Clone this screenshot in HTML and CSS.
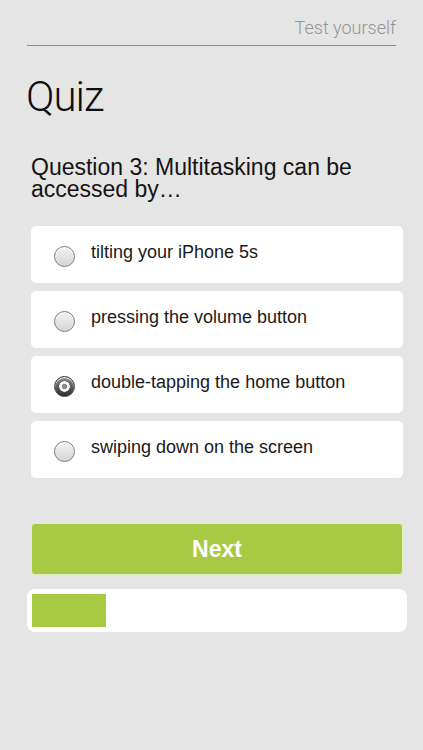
FILE: index.html
```html
<!DOCTYPE html>
<html>
<head>
<meta charset="utf-8">
<link rel="stylesheet" href="styles.css">
</head>
<body>
<div class="page">
  <header class="topbar"><span class="topbar-title">Test yourself</span></header>
  <h1 class="title">Quiz</h1>
  <p class="question">Question 3: Multitasking can be accessed by…</p>
  <ul class="options">
    <li class="option"><span class="radio"></span><span class="option-text">tilting your iPhone 5s</span></li>
    <li class="option"><span class="radio"></span><span class="option-text">pressing the volume button</span></li>
    <li class="option"><span class="radio radio-on"></span><span class="option-text">double-tapping the home button</span></li>
    <li class="option"><span class="radio"></span><span class="option-text">swiping down on the screen</span></li>
  </ul>
  <button class="next">Next</button>
  <div class="progress"><div class="progress-bar" style="width: 74px"></div></div>
</div>
</body>
</html>
```
FILE: styles.css
```css
html, body {
  margin: 0;
  padding: 0;
  background: #e5e5e5;
}
.page {
  width: 423px;
  height: 750px;
  font-family: "Liberation Sans", Arial, sans-serif;
  color: #111;
}
.topbar {
  margin: 0 27px;
  padding: 17px 0 5px;
  border-bottom: 1px solid #8d8b89;
  text-align: right;
  line-height: 22px;
}
.topbar-title {
  font-family: Roboto, "Liberation Sans", sans-serif;
  font-weight: 300;
  font-size: 18px;
  color: #949494;
}
.title {
  margin: 26px 0 0 26px;
  font-family: Roboto, "Liberation Sans", sans-serif;
  font-weight: 300;
  font-size: 42px;
  line-height: 50px;
  letter-spacing: -1px;
  color: #0d0d0d;
}
.question {
  margin: 34px 40px 0 31px;
  font-size: 23px;
  line-height: 22px;
  color: #141414;
}
.options {
  list-style: none;
  margin: 26px 20px 0 31px;
  padding: 0;
  display: flex;
  flex-direction: column;
  gap: 8px;
}
.option {
  height: 57px;
  background: #fff;
  border-radius: 5px;
  display: flex;
  align-items: center;
  padding-left: 23px;
  gap: 16px;
}
.radio {
  width: 19px;
  height: 19px;
  border-radius: 50%;
  border: 1px solid #7a7a7a;
  background: linear-gradient(#f4f4f4, #d4d4d4);
  box-shadow: inset 0 1px 1px #fff;
  flex: none;
  margin-top: 3px;
}
.radio-on {
  background: radial-gradient(circle, #8a8a8a 0 2.5px, #f5f5f5 3px 5px, transparent 5.5px), linear-gradient(#8c8c8c, #2e2e2e);
  border-color: #3a3a3a;
}
.option-text {
  font-size: 18px;
  color: #1a1a1a;
  margin-top: -4px;
}
.next {
  display: block;
  box-sizing: border-box;
  margin: 45px 20px 0 31px;
  width: 372px;
  height: 52px;
  background: #a8c943;
  border: 1px solid #e2edbb;
  border-radius: 4px;
  color: #fff;
  font-family: "Liberation Sans", Arial, sans-serif;
  font-weight: bold;
  font-size: 23px;
  padding: 0;
}
.progress {
  margin: 14px 16px 0 27px;
  height: 43px;
  box-sizing: border-box;
  background: #fff;
  border-radius: 8px;
  padding: 5px;
}
.progress-bar {
  height: 33px;
  background: #a8c943;
}
```
